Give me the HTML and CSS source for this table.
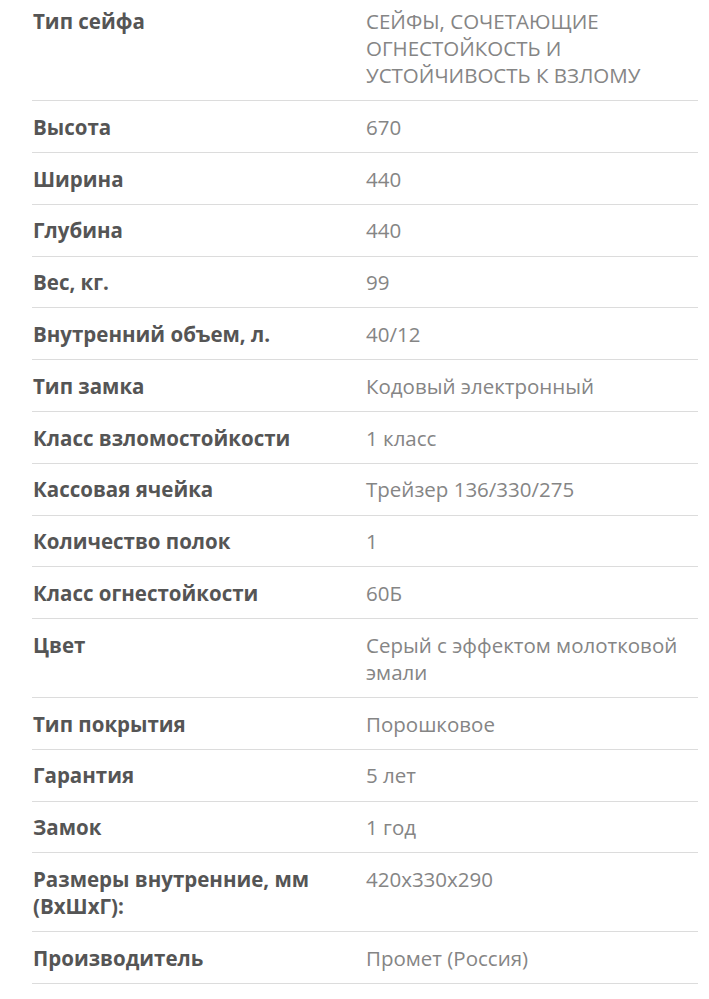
FILE: index.html
```html
<!DOCTYPE html>
<html lang="ru">
<head>
<meta charset="utf-8">
<link rel="stylesheet" href="styles.css">
</head>
<body>
<div class="specs">
<table class="spec-table">
<colgroup><col class="col-label"><col class="col-value"></colgroup>
<tbody>
<tr class="first"><th>Тип сейфа</th><td>СЕЙФЫ, СОЧЕТАЮЩИЕ ОГНЕСТОЙКОСТЬ И УСТОЙЧИВОСТЬ К ВЗЛОМУ</td></tr>
<tr><th>Высота</th><td>670</td></tr>
<tr><th>Ширина</th><td>440</td></tr>
<tr><th>Глубина</th><td>440</td></tr>
<tr><th>Вес, кг.</th><td>99</td></tr>
<tr><th>Внутренний объем, л.</th><td>40/12</td></tr>
<tr><th>Тип замка</th><td>Кодовый электронный</td></tr>
<tr><th>Класс взломостойкости</th><td>1 класс</td></tr>
<tr><th>Кассовая ячейка</th><td>Трейзер 136/330/275</td></tr>
<tr><th>Количество полок</th><td>1</td></tr>
<tr><th>Класс огнестойкости</th><td>60Б</td></tr>
<tr><th>Цвет</th><td>Серый с эффектом молотковой эмали</td></tr>
<tr><th>Тип покрытия</th><td>Порошковое</td></tr>
<tr><th>Гарантия</th><td>5 лет</td></tr>
<tr><th>Замок</th><td>1 год</td></tr>
<tr><th>Размеры внутренние, мм (ВхШхГ):</th><td>420x330x290</td></tr>
<tr><th>Производитель</th><td>Промет (Россия)</td></tr>
</tbody>
</table>
</div>
</body>
</html>
```
FILE: styles.css
```css
html, body {
  margin: 0;
  padding: 0;
  background: #fff;
}
.specs {
  padding-left: 32px;
  width: 666px;
}
.spec-table {
  width: 100%;
  table-layout: fixed;
  border-collapse: collapse;
  font-family: "Open Sans", sans-serif;
  font-size: 20.5px;
  line-height: 27px;
}
.col-label {
  width: 333px;
}
.spec-table th,
.spec-table td {
  text-align: left;
  vertical-align: top;
  padding: 12.5px 0 11.3px 1px;
  border-bottom: 1px solid #dcdcdc;
}
.spec-table th {
  font-weight: 700;
  color: #555;
  padding-right: 24px;
}
.spec-table td {
  color: #858585;
  font-weight: 400;
  padding-right: 8px;
}
.spec-table tr.first th,
.spec-table tr.first td {
  padding-top: 8px;
}
```
